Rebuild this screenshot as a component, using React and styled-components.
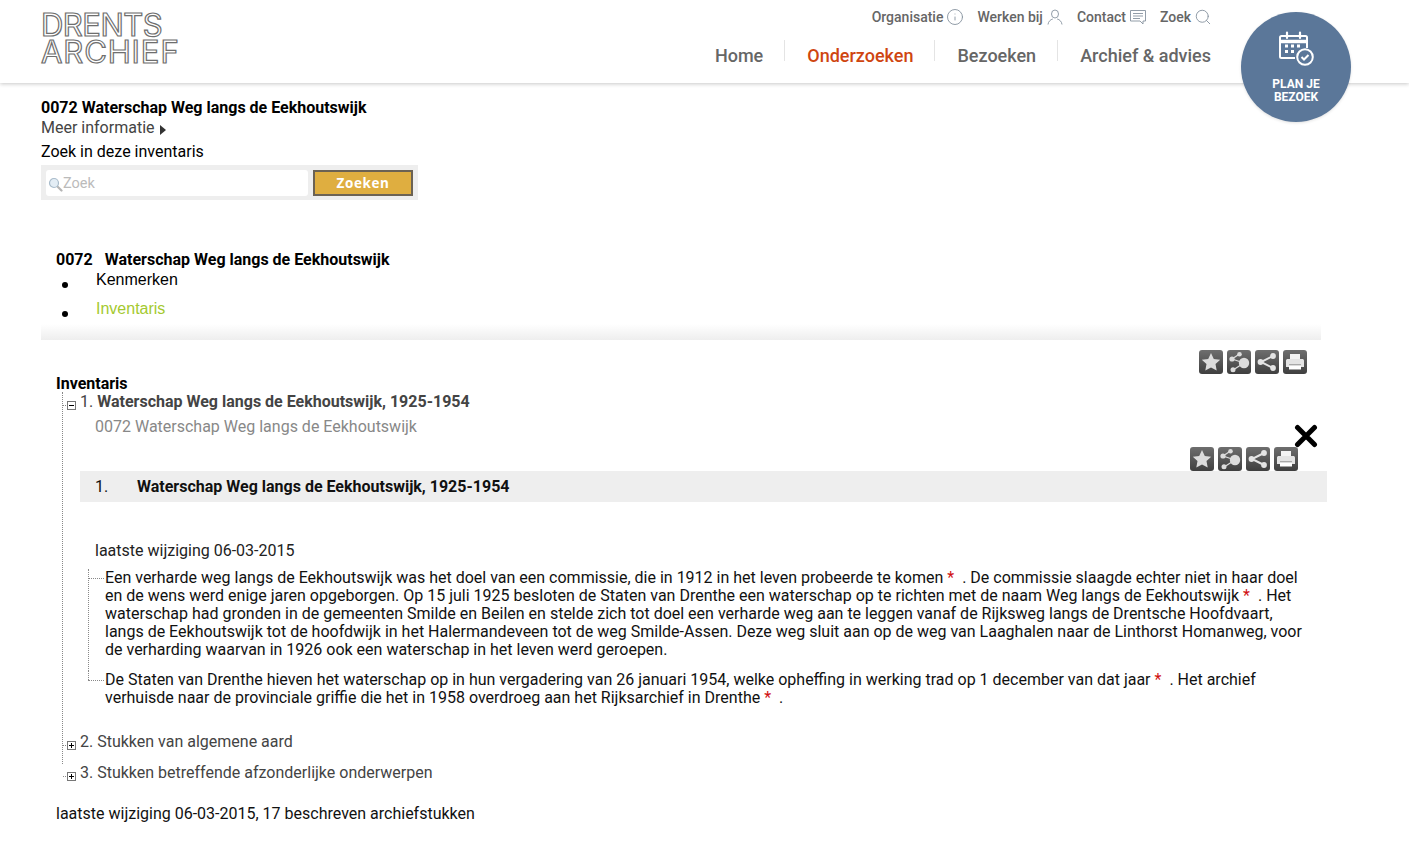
import styled, { createGlobalStyle } from "styled-components";
import { Info, Search } from "lucide-react";

const GlobalStyle = createGlobalStyle`
  html, body {
    margin: 0;
    padding: 0;
    background: #fff;
    font-family: Roboto, "Liberation Sans", sans-serif;
    font-size: 16px;
    color: #000;
  }
  * {
    box-sizing: border-box;
  }
`;

const Page = styled.div`
  position: relative;
  width: 1409px;
  height: 856px;
  overflow: hidden;
`;

/* header */
const Header = styled.header`
  height: 83px;
  padding: 0 198px 0 41px;
  display: flex;
  justify-content: space-between;
  box-shadow: 0 1px 4px rgba(0, 0, 0, 0.22);
`;

const Logo = styled.div`
  padding-top: 11px;
  font-family: Inter, sans-serif;
  font-size: 31px;
  font-weight: 400;
  color: #fff;
  -webkit-text-stroke: 1.2px #6e6e6e;
`;

const LogoLine = styled.div`
  height: 27px;
  line-height: 27px;
  white-space: nowrap;
  letter-spacing: ${(p) => p.$spacing}px;
`;

const HeaderRight = styled.div`
  display: flex;
  flex-direction: column;
  align-items: flex-end;
`;

const TopLinks = styled.div`
  display: flex;
  gap: 14px;
  padding-top: 8px;
  height: 40px;
`;

const TopLink = styled.a`
  display: flex;
  align-items: flex-start;
  gap: 4px;
  font-size: 14px;
  line-height: 18px;
  font-weight: 500;
  color: #666;

  svg {
    margin-top: 1px;
    color: #86929e;
  }

  svg.lucide {
    margin: 0 -1px;
  }
`;

const MainNav = styled.nav`
  display: flex;
`;

const NavItem = styled.a`
  display: block;
  height: 21px;
  padding: 0 ${(p) => (p.$last ? 0 : 21)}px 0 22px;
  border-right: ${(p) => (p.$last ? "none" : "1px solid #e4e4e4")};
  font-size: 18px;
  line-height: 32px;
  font-weight: 500;
  white-space: nowrap;
  color: ${(p) => (p.$active ? "#cf4510" : "#666")};
`;

const PlanButton = styled.a`
  position: absolute;
  left: 1241px;
  top: 12px;
  width: 110px;
  height: 110px;
  border-radius: 50%;
  background: #5b7799;
  box-shadow: 0 1px 3px rgba(0, 0, 0, 0.12);
  color: #fff;
  display: flex;
  flex-direction: column;
  align-items: center;
  padding-top: 19px;
  font-size: 12px;
  line-height: 13px;
  font-weight: 700;
  text-align: center;

  svg {
    margin-bottom: 11px;
  }
`;

/* content */
const Main = styled.main`
  padding: 15px 0 0 41px;
  line-height: 20px;
`;

const Strong = styled.div`
  font-weight: 700;
`;

const Code = styled.span`
  margin-right: 12px;
`;

const MoreInfo = styled.div`
  color: #444;
  display: flex;
  align-items: center;
  gap: 5px;

  &::after {
    content: "";
    margin-top: 3px;
    border-left: 6px solid #333;
    border-top: 5px solid transparent;
    border-bottom: 5px solid transparent;
  }
`;

const SearchLabel = styled.div`
  margin-top: 4px;
`;

const SearchPanel = styled.form`
  margin-top: 3px;
  width: 377px;
  height: 35px;
  background: #eee;
  padding: 5px;
  display: flex;
  gap: 5px;
`;

const SearchBox = styled.div`
  width: 262px;
  height: 26px;
  background: #fff;
  border-radius: 3px;
  display: flex;
  align-items: center;
  padding: 2px 0 0 2px;
  font-size: 14.5px;
  color: #bbb;
`;

const SearchButton = styled.div`
  width: 100px;
  height: 26px;
  background: #dfae40;
  border: 2px solid #6b6254;
  color: #fff;
  font-family: "Open Sans", sans-serif;
  font-size: 13.5px;
  font-weight: 700;
  letter-spacing: 0.6px;
  line-height: 22px;
  text-align: center;
`;

const Section = styled.section`
  margin-top: 50px;
`;

const Indent = styled.div`
  padding-left: 15px;
`;

const TabList = styled.ul`
  margin: 0;
  padding: 0 0 0 55px;
  font-family: "Liberation Sans", sans-serif;
  list-style: none;
`;

const Tab = styled.li`
  position: relative;
  height: 20px;
  margin-bottom: 9px;
  color: ${(p) => (p.$active ? "#a4c92f" : "#000")};

  &::before {
    content: "";
    position: absolute;
    left: -34px;
    top: 12px;
    width: 6px;
    height: 6px;
    border-radius: 50%;
    background: #000;
  }
`;

const FadeBand = styled.div`
  margin-top: -4px;
  width: 1280px;
  height: 16px;
  background: linear-gradient(#fff, #eee);
`;

const Tools = styled.div`
  display: flex;
  justify-content: flex-end;
  gap: 4px;
  width: ${(p) => p.$width}px;
  height: 24px;
  margin-top: ${(p) => p.$top}px;
`;

const ToolButton = styled.a`
  width: 24px;
  height: 24px;
  border-radius: 3px;
  background: linear-gradient(#6e6e6e, #3f3f3f);
  display: block;
`;

const TreeRoot = styled.div`
  margin-left: 6px;
  margin-top: -2px;
  height: 372px;
  border-left: 1px dotted #888;
`;

const TreeRow = styled.div`
  position: relative;
  height: 20px;
  padding-left: 17px;
  white-space: nowrap;
  color: #444;
  margin-top: ${(p) => p.$top || 0}px;
  margin-bottom: ${(p) => p.$bottom || 0}px;

  &::before {
    content: "";
    position: absolute;
    left: 0;
    top: 13px;
    width: 5px;
    border-top: 1px dotted #888;
  }
`;

const Toggle = styled.span`
  position: absolute;
  left: 4px;
  top: 9px;
  width: 9px;
  height: 9px;
  border: 1px solid #777;
  background: #fff;

  &::before {
    content: "";
    position: absolute;
    left: 1px;
    top: 3px;
    width: 5px;
    height: 1px;
    background: #000;
  }

  &::after {
    content: "";
    display: ${(p) => (p.$plus ? "block" : "none")};
    position: absolute;
    left: 3px;
    top: 1px;
    width: 1px;
    height: 5px;
    background: #000;
  }
`;

const Bold = styled.b`
  font-weight: 700;
`;

const Detail = styled.div`
  position: relative;
  padding-left: 17px;
`;

const SubTitle = styled.div`
  padding-left: 15px;
  margin-top: 5px;
  color: #888;
`;

const CloseMark = styled.svg`
  position: absolute;
  left: 1231px;
  top: 7px;
`;

const RecordBand = styled.div`
  width: 1247px;
  height: 31px;
  background: #eee;
  display: flex;
  align-items: center;
  padding-left: 15px;
  font-weight: 700;
  color: #111;
`;

const RecordNumber = styled.span`
  width: 42px;
  font-weight: 400;
`;

const Modified = styled.div`
  padding-left: 15px;
  margin-top: 39px;
  color: #222;
`;

const Notes = styled.div`
  margin: 8px 0 0 8px;
`;

const Note = styled.p`
  margin: 0 0 12px;
  padding-left: 17px;
  position: relative;
  line-height: 18px;
  color: #111;
  white-space: nowrap;

  &::before {
    content: "";
    position: absolute;
    left: 0;
    top: 9px;
    width: 16px;
    border-top: 1px dotted #888;
  }

  &::after {
    content: "";
    position: absolute;
    left: 0;
    top: 0;
    border-left: 1px dotted #888;
    height: ${(p) => (p.$last ? "9px" : "calc(100% + 12px)")};
  }
`;

const Mark = styled.span`
  color: #d01010;
  margin-right: 4px;
`;

const Footer = styled.div`
  margin-top: 40px;
  color: #111;
`;

function Star() {
  return (
    <svg width="24" height="24" viewBox="0 0 24 24">
      <path d="M12 3l2.800 5.900 6.400.8-4.700 4.400 1.200 6.400-5.700-3.100-5.700 3.100 1.200-6.400-4.700-4.400 6.400-.8z" fill="#dcdcdc" />
    </svg>
  );
}

function Network() {
  return (
    <svg width="24" height="24" viewBox="0 0 24 24" fill="#dcdcdc">
      <path d="M5 9l7.500-5M5 9l12 4M6 20l11-7" stroke="#dcdcdc" strokeWidth="1.300" fill="none" />
      <circle cx="17" cy="13" r="5.200" />
      <circle cx="12.500" cy="4.300" r="2.300" />
      <circle cx="5" cy="9" r="2.600" />
      <circle cx="6" cy="19.800" r="2.500" />
    </svg>
  );
}

function Share() {
  return (
    <svg width="24" height="24" viewBox="0 0 24 24" fill="#e4e4e4">
      <path d="M18 6L6 12l12 6" fill="none" stroke="#e4e4e4" strokeWidth="2" />
      <circle cx="18" cy="6" r="2.900" />
      <circle cx="5.500" cy="12" r="2.900" />
      <circle cx="18" cy="18" r="2.900" />
    </svg>
  );
}

function Printer() {
  return (
    <svg width="24" height="24" viewBox="0 0 24 24">
      <path d="M7 4h10v6H7z" fill="#f4f4f4" />
      <path d="M3 10.500C3 9.500 3.800 9 5 9h14c1.200 0 2 .5 2 1.500V17H3z" fill="#e4e4e4" />
      <path d="M6 14.500h12v5H6z" fill="#fff" />
      <path d="M6 14.800h12" stroke="#8a8a8a" strokeWidth="1" />
    </svg>
  );
}

function ToolSet({ width, top }) {
  return (
    <Tools $width={width} $top={top}>
      <ToolButton><Star /></ToolButton>
      <ToolButton><Network /></ToolButton>
      <ToolButton><Share /></ToolButton>
      <ToolButton><Printer /></ToolButton>
    </Tools>
  );
}

function CalendarCheckIcon() {
  return (
    <svg width="37" height="36" viewBox="0 0 37 36" fill="none" stroke="#fff">
      <path d="M17 27H3.500C2.600 27 2 26.400 2 25.500V6.500C2 5.600 2.600 5 3.500 5H27.500C28.400 5 29 5.600 29 6.500V17" strokeWidth="2" />
      <path d="M2 10.500H29" strokeWidth="3.500" />
      <path d="M9 1.500V7M22 1.500V7" strokeWidth="2.200" strokeLinecap="round" />
      <path d="M7 15h3M13 15h3M19 15h3M7 20.500h3M13 20.500h3" strokeWidth="3" />
      <circle cx="27" cy="26" r="7.800" strokeWidth="2" />
      <path d="M23.500 26l2.500 2.500 4.500-4.500" strokeWidth="2" />
    </svg>
  );
}

function PersonIcon() {
  return (
    <svg width="16" height="16" viewBox="0 0 16 16" fill="none" stroke="currentColor" strokeWidth="0.9">
      <ellipse cx="8" cy="5" rx="3.500" ry="4" />
      <path d="M1 15.500c.3-3 2.500-5 4.800-5.500M15 15.500c-.3-3-2.500-5-4.800-5.500" />
    </svg>
  );
}

function ChatIcon() {
  return (
    <svg width="16" height="16" viewBox="0 0 16 16" fill="none" stroke="currentColor" strokeWidth="0.9">
      <path d="M.5 1.500h15v10.500h-2.500v3l-3-3H.5z" />
      <path d="M3 4.500h10M3 7h10M3 9.500h7" />
    </svg>
  );
}

function GlassIcon() {
  return (
    <svg width="15" height="15" viewBox="0 0 15 15">
      <path d="M9 9l4.500 4.500" stroke="#b5b5b5" strokeWidth="2.200" strokeLinecap="round" />
      <circle cx="6" cy="6" r="4.500" fill="#e3edf5" stroke="#a9bccb" strokeWidth="1.200" />
    </svg>
  );
}

export default function App() {
  return (
    <Page>
      <GlobalStyle />
      <Header>
        <Logo>
          <LogoLine $spacing={-0.5}>DRENTS</LogoLine>
          <LogoLine $spacing={0.9}>ARCHIEF</LogoLine>
        </Logo>
        <HeaderRight>
          <TopLinks>
            <TopLink>Organisatie <Info size={18} strokeWidth={1.2} /></TopLink>
            <TopLink>Werken bij <PersonIcon /></TopLink>
            <TopLink>Contact <ChatIcon /></TopLink>
            <TopLink>Zoek <Search size={18} strokeWidth={1.2} /></TopLink>
          </TopLinks>
          <MainNav>
            <NavItem>Home</NavItem>
            <NavItem $active>Onderzoeken</NavItem>
            <NavItem>Bezoeken</NavItem>
            <NavItem $last>Archief &amp; advies</NavItem>
          </MainNav>
        </HeaderRight>
      </Header>
      <PlanButton>
        <CalendarCheckIcon />
        PLAN JE<br />BEZOEK
      </PlanButton>

      <Main>
        <Strong>0072 Waterschap Weg langs de Eekhoutswijk</Strong>
        <MoreInfo>Meer informatie</MoreInfo>
        <SearchLabel>Zoek in deze inventaris</SearchLabel>
        <SearchPanel>
          <SearchBox>
            <GlassIcon />
            Zoek
          </SearchBox>
          <SearchButton>Zoeken</SearchButton>
        </SearchPanel>

        <Section>
          <Indent>
            <Strong><Code>0072</Code>Waterschap Weg langs de Eekhoutswijk</Strong>
          </Indent>
          <TabList>
            <Tab>Kenmerken</Tab>
            <Tab $active>Inventaris</Tab>
          </TabList>
          <FadeBand />
          <ToolSet width={1266} top={10} />
          <Indent>
            <Strong>Inventaris</Strong>
            <TreeRoot>
              <TreeRow>
                <Toggle />
                1. <Bold>Waterschap Weg langs de Eekhoutswijk, 1925-1954</Bold>
              </TreeRow>
              <Detail>
                <SubTitle>0072 Waterschap Weg langs de Eekhoutswijk</SubTitle>
                <CloseMark width="24" height="24" viewBox="0 0 24 24">
                  <path d="M3.500 3.500L20.500 20.500M20.500 3.500L3.500 20.500" stroke="#000" strokeWidth="5" strokeLinecap="round" />
                </CloseMark>
                <ToolSet width={1218} top={10} />
                <RecordBand>
                  <RecordNumber>1.</RecordNumber>
                  Waterschap Weg langs de Eekhoutswijk, 1925-1954
                </RecordBand>
                <Modified>laatste wijziging 06-03-2015</Modified>
                <Notes>
                  <Note>
                    Een verharde weg langs de Eekhoutswijk was het doel van een commissie, die in 1912 in het leven probeerde te komen <Mark>*</Mark> . De commissie slaagde echter niet in haar doel<br />
                    en de wens werd enige jaren opgeborgen. Op 15 juli 1925 besloten de Staten van Drenthe een waterschap op te richten met de naam Weg langs de Eekhoutswijk <Mark>*</Mark> . Het<br />
                    waterschap had gronden in de gemeenten Smilde en Beilen en stelde zich tot doel een verharde weg aan te leggen vanaf de Rijksweg langs de Drentsche Hoofdvaart,<br />
                    langs de Eekhoutswijk tot de hoofdwijk in het Halermandeveen tot de weg Smilde-Assen. Deze weg sluit aan op de weg van Laaghalen naar de Linthorst Homanweg, voor<br />
                    de verharding waarvan in 1926 ook een waterschap in het leven werd geroepen.
                  </Note>
                  <Note $last>
                    De Staten van Drenthe hieven het waterschap op in hun vergadering van 26 januari 1954, welke opheffing in werking trad op 1 december van dat jaar <Mark>*</Mark> . Het archief<br />
                    verhuisde naar de provinciale griffie die het in 1958 overdroeg aan het Rijksarchief in Drenthe <Mark>*</Mark> .
                  </Note>
                </Notes>
              </Detail>
              <TreeRow $top={25} $bottom={11}>
                <Toggle $plus />
                2. Stukken van algemene aard
              </TreeRow>
              <TreeRow>
                <Toggle $plus />
                3. Stukken betreffende afzonderlijke onderwerpen
              </TreeRow>
            </TreeRoot>
            <Footer>laatste wijziging 06-03-2015, 17 beschreven archiefstukken</Footer>
          </Indent>
        </Section>
      </Main>
    </Page>
  );
}
